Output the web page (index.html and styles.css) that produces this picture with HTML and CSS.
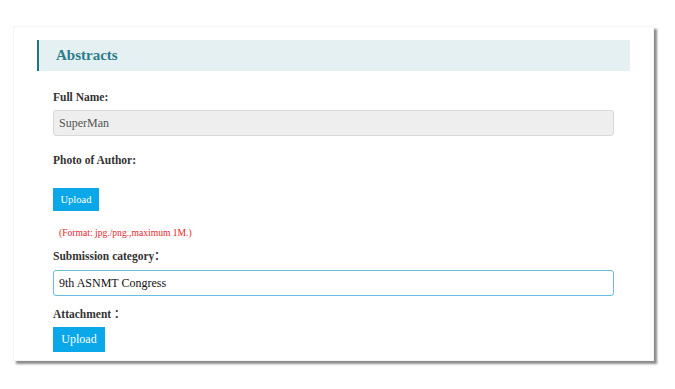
FILE: index.html
```html
<!DOCTYPE html>
<html lang="en">
<head>
    <meta charset="UTF-8">
    <meta name="viewport" content="width=device-width, initial-scale=1.0">
    <title>Abstracts</title>
    <link rel="stylesheet" href="styles.css">
</head>
<body>
    <div class="card">
        <h2 class="panel-title">Abstracts</h2>

        <form class="abstract-form">
            <label class="field-label first">Full Name:</label>
            <input type="text" class="field readonly" value="SuperMan" readonly>

            <label class="field-label photo">Photo of Author:</label>
            <button type="button" class="upload-btn small">Upload</button>
            <p class="hint">(Format: jpg./png.,maximum 1M.)</p>

            <label class="field-label category">Submission category<span class="colon">：</span></label>
            <input type="text" class="field active" value="9th ASNMT Congress">

            <label class="field-label attach">Attachment <span class="colon">：</span></label>
            <button type="button" class="upload-btn">Upload</button>
        </form>
    </div>
</body>
</html>
```

FILE: styles.css
```css
body {
    margin: 0;
    padding-bottom: 20px;
    background: #fff;
    font-family: "Liberation Serif", "Times New Roman", serif;
    color: #333;
}
.card {
    margin: 26px 0 0 13px;
    width: 593px;
    padding: 13px 23px 8px 23px;
    background: #fff;
    border: 1px solid #f4f4f4;
    box-shadow: 3px 3px 2px rgba(0, 0, 0, 0.45);
}
.panel-title {
    margin: 0;
    height: 31px;
    line-height: 31px;
    padding-left: 17px;
    border-left: 2px solid #1f7585;
    background: #e4f0f1;
    color: #2b7b8b;
    font-size: 15px;
    font-weight: bold;
}
.abstract-form {
    padding: 0 16px;
}
.field-label {
    display: block;
    font-size: 11.5px;
    font-weight: bold;
    line-height: 16px;
    color: #333;
}
.field-label .colon {
    font-family: "Noto Sans CJK SC", sans-serif;
    font-size: 11px;
    letter-spacing: -3px;
}
.field-label.first {
    margin-top: 18px;
}
.field-label.photo {
    margin-top: 16px;
}
.field-label.category {
    margin-top: 6px;
}
.field-label.attach {
    margin-top: 9px;
}
.field {
    display: block;
    box-sizing: border-box;
    width: 100%;
    height: 26px;
    margin-top: 5px;
    padding: 0 5px;
    font-family: "Liberation Serif", "Times New Roman", serif;
    font-size: 12px;
    border-radius: 3px;
    outline: none;
}
.field.readonly {
    background: #eee;
    border: 1px solid #d9d9d9;
    color: #555;
}
.field.active {
    margin-top: 6px;
    background: #fff;
    border: 1.5px solid #66bfdc;
    color: #111;
}
.upload-btn {
    display: block;
    height: 25px;
    width: 52px;
    margin-top: 5px;
    padding: 0;
    border: none;
    background: #0aa7e9;
    color: #fff;
    font-family: "Liberation Serif", "Times New Roman", serif;
    font-size: 12px;
    cursor: pointer;
}
.upload-btn.small {
    height: 23px;
    width: 46px;
    margin-top: 20px;
    font-size: 10.5px;
}
.hint {
    margin: 14px 0 0;
    padding-left: 6px;
    line-height: 16px;
    font-size: 9.6px;
    color: #e81e28;
}
```
